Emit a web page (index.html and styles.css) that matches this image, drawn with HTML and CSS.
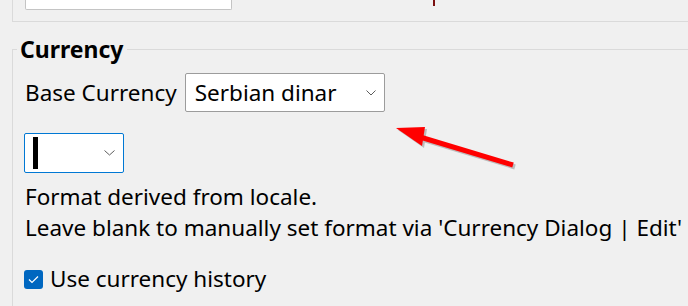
FILE: index.html
```html
<!DOCTYPE html>
<html lang="en">
<head>
<meta charset="utf-8">
<title>Currency settings</title>
<link rel="stylesheet" href="styles.css">
</head>
<body>
<div class="page">
  <div class="upper">
    <div class="input-stub"></div>
    <div class="mark"></div>
  </div>
  <section class="group">
    <h2 class="group-title">Currency</h2>
    <div class="row">
      <span class="label">Base Currency</span>
      <div class="select wide">
        <span class="value">Serbian dinar</span>
        <svg class="chev" width="10" height="6" viewBox="0 0 10 6"><path d="M0.5 0.5 L5 5 L9.5 0.5" fill="none" stroke="#5c5c5c" stroke-width="1"/></svg>
      </div>
    </div>
    <div class="select narrow focused">
      <span class="caret"></span>
      <svg class="chev" width="11" height="6" viewBox="0 0 11 6"><path d="M0.5 0.5 L5.5 5 L10.5 0.5" fill="none" stroke="#5c5c5c" stroke-width="1"/></svg>
    </div>
    <p class="note">Format derived from locale.<br>Leave blank to manually set format via 'Currency Dialog | Edit'</p>
    <label class="check">
      <span class="box"><svg width="11" height="9" viewBox="0 0 11 9"><path d="M1 4.5 L4 7.5 L10 1.5" fill="none" stroke="#fff" stroke-width="1.2"/></svg></span>
      <span>Use currency history</span>
    </label>
  </section>
  <svg class="arrow" width="688" height="306" viewBox="0 0 688 306">
    <g fill="#9a9a9a" stroke="#9a9a9a" opacity="0.6" transform="translate(2,2)">
      <polygon points="396,128 425,127 422,146" stroke="none"/>
      <line x1="420" y1="137" x2="513" y2="165" stroke-width="5"/>
    </g>
    <polygon points="396,128 425,127 422,146" fill="#ff0000"/>
    <line x1="420" y1="137" x2="513" y2="165" stroke="#ff0000" stroke-width="5"/>
  </svg>
</div>
</body>
</html>
```
FILE: styles.css
```css
* { box-sizing: border-box; }
html, body { margin: 0; padding: 0; }
body {
  background: #f0f0f0;
  font-family: "Noto Sans", "Open Sans", sans-serif;
  color: #000;
  width: 688px;
  height: 306px;
  overflow: hidden;
}
.page {
  position: relative;
  width: 688px;
  height: 306px;
}
.upper {
  display: flex;
  align-items: flex-start;
  margin-left: 12px;
  height: 22px;
  border-left: 1px solid #dadada;
  border-bottom: 1px solid #dadada;
}
.input-stub {
  margin-left: 12px;
  width: 207px;
  height: 10px;
  background: #fff;
  border: 1px solid #c4c4c4;
  border-top: none;
  border-radius: 0 0 2px 2px;
}
.mark {
  margin-left: 201px;
  width: 2px;
  height: 6px;
  background: #7a1010;
}
.group {
  margin: 27px 0 0 12px;
  border-top: 1px solid #dadada;
  border-left: 1px solid #dadada;
  height: 260px;
}
.group-title {
  display: block;
  width: fit-content;
  margin: -14px 0 0 4px;
  padding: 0 3px;
  background: #f0f0f0;
  font-size: 23px;
  line-height: 26px;
  font-weight: 700;
}
.row {
  display: flex;
  align-items: center;
  gap: 8px;
  margin-top: 11px;
  padding-left: 12px;
}
.label, .note, .check {
  font-size: 22.5px;
}
.select {
  display: flex;
  align-items: center;
  justify-content: space-between;
  background: #fff;
  border: 1px solid #9c9c9c;
  border-radius: 2px;
}
.select.wide {
  width: 200px;
  height: 39px;
  padding: 0 8px 0 9px;
  font-size: 22.5px;
}
.select.narrow {
  width: 100px;
  height: 40px;
  margin: 21px 0 0 11px;
  padding: 0 8px 0 8px;
}
.select.focused { border-color: #0078d4; }
.caret {
  width: 5px;
  height: 32px;
  background: #000;
}
.note {
  margin: 8px 0 0 12px;
  line-height: 31px;
  white-space: nowrap;
}
.check {
  display: flex;
  align-items: center;
  gap: 7px;
  margin: 21px 0 0 11px;
  line-height: 30px;
}
.box {
  display: flex;
  align-items: center;
  justify-content: center;
  width: 19px;
  height: 19px;
  background: #0067c0;
  border-radius: 3px;
}
.arrow {
  position: absolute;
  left: 0;
  top: 0;
  pointer-events: none;
}
```
